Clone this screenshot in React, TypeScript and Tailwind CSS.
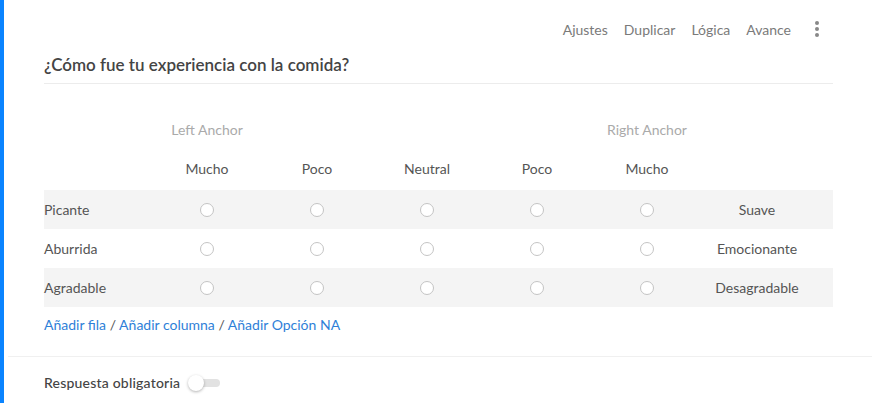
const columns = ['Mucho', 'Poco', 'Neutral', 'Poco', 'Mucho'];

const rows = [
  { left: 'Picante', right: 'Suave', shaded: true },
  { left: 'Aburrida', right: 'Emocionante', shaded: false },
  { left: 'Agradable', right: 'Desagradable', shaded: true },
];

function Radio() {
  return <span className="inline-block w-[14px] h-[14px] rounded-full border border-[#c4c4c4] bg-white" />;
}

export default function App() {
  return (
    <div
      className="w-[872px] h-[403px] bg-white flex overflow-hidden"
      style={{ fontFamily: 'Lato, "Open Sans", sans-serif' }}
    >
      <div className="w-[4px] bg-[#0a84ff] shrink-0" />

      <div className="flex-1 flex flex-col">
        <div className="pl-[40px] pr-[39px]">
          <div className="flex justify-end items-center gap-[16px] pt-[18px] pr-[14px] text-[14px] text-[#7a7a7a] h-[40px]">
            <span>Ajustes</span>
            <span>Duplicar</span>
            <span>Lógica</span>
            <span>Avance</span>
            <span className="flex flex-col gap-[2px] ml-[8px]">
              <span className="w-[4px] h-[4px] rounded-full bg-[#888]" />
              <span className="w-[4px] h-[4px] rounded-full bg-[#888]" />
              <span className="w-[4px] h-[4px] rounded-full bg-[#888]" />
            </span>
          </div>

          <h1 className="mt-[14px] text-[17px] font-semibold text-[#444] leading-[22px] pb-[7px] border-b border-[#ececec]">
            ¿Cómo fue tu experiencia con la comida?
          </h1>

          <div className="grid grid-cols-[108px_repeat(6,110px)_1fr] text-[14px] mt-[35px]">
            <div />
            <div className="text-center text-[#aaa] h-[30px]">Left Anchor</div>
            <div />
            <div />
            <div />
            <div className="text-center text-[#aaa]">Right Anchor</div>
            <div />
            <div />

            <div className="h-[41px]" />
            {columns.map((c, i) => (
              <div key={i} className="text-center text-[#555] pt-[9px]">
                {c}
              </div>
            ))}
            <div />
            <div />

            {rows.map((r) => (
              <div key={r.left} className="contents">
                <div className={`h-[39px] flex items-center text-[#555] ${r.shaded ? 'bg-[#f4f4f4]' : ''}`}>{r.left}</div>
                {columns.map((_, i) => (
                  <div key={i} className={`flex items-center justify-center ${r.shaded ? 'bg-[#f4f4f4]' : ''}`}>
                    <Radio />
                  </div>
                ))}
                <div className={`flex items-center justify-center text-[#555] ${r.shaded ? 'bg-[#f4f4f4]' : ''}`}>{r.right}</div>
                <div className={r.shaded ? 'bg-[#f4f4f4]' : ''} />
              </div>
            ))}
          </div>

          <div className="mt-[7px] text-[14px] text-[#2f7fd8]">
            Añadir fila <span className="text-[#555]">/</span> Añadir columna{' '}
            <span className="text-[#555]">/</span> Añadir Opción NA
          </div>
        </div>

        <div className="mt-[21px] ml-[4px] border-t border-[#f0f0f0]" />

        <div className="pl-[40px] pt-[15px] flex items-center gap-[8px]">
          <span className="text-[14px] font-medium text-[#444] tracking-[0.2px]">Respuesta obligatoria</span>
          <span className="relative w-[32px] h-[18px] flex items-center">
            <span className="absolute left-[12px] right-0 h-[8px] rounded-full bg-[#e2e2e2]" />
            <span className="absolute left-0 w-[16px] h-[16px] rounded-full bg-white shadow-[0_1px_3px_rgba(0,0,0,0.3)]" />
          </span>
        </div>
      </div>
    </div>
  );
}
